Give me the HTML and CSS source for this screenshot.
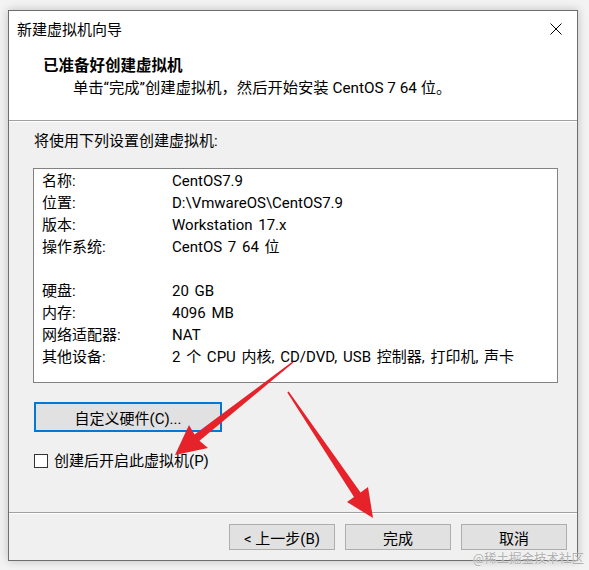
FILE: index.html
```html
<!DOCTYPE html>
<html lang="zh-CN">
<head>
<meta charset="utf-8">
<title>新建虚拟机向导</title>
<link rel="stylesheet" href="styles.css">
</head>
<body>
<div class="window">
  <div class="titlebar">
    <span class="title">新建虚拟机向导</span>
    <svg class="close" width="12" height="12" viewBox="0 0 12 12"><path d="M0.5 0.5 L11.5 11.5 M11.5 0.5 L0.5 11.5" stroke="#000" stroke-width="1" fill="none"/></svg>
  </div>
  <div class="header">
    <div class="h-title">已准备好创建虚拟机</div>
    <div class="h-sub">单击“完成”创建虚拟机，然后开始安装 CentOS 7 64 位。</div>
  </div>
  <div class="content">
    <div class="intro">将使用下列设置创建虚拟机:</div>
    <div class="summary">
      <div class="row"><span class="k">名称:</span><span class="v">CentOS7.9</span></div>
      <div class="row"><span class="k">位置:</span><span class="v">D:\VmwareOS\CentOS7.9</span></div>
      <div class="row"><span class="k">版本:</span><span class="v">Workstation 17.x</span></div>
      <div class="row"><span class="k">操作系统:</span><span class="v">CentOS 7 64 位</span></div>
      <div class="row"></div>
      <div class="row"><span class="k">硬盘:</span><span class="v">20 GB</span></div>
      <div class="row"><span class="k">内存:</span><span class="v">4096 MB</span></div>
      <div class="row"><span class="k">网络适配器:</span><span class="v">NAT</span></div>
      <div class="row"><span class="k">其他设备:</span><span class="v">2 个 CPU 内核, CD/DVD, USB 控制器, 打印机, 声卡</span></div>
    </div>
    <button class="btn btn-custom">自定义硬件(C)...</button>
    <label class="check"><span class="box"></span><span>创建后开启此虚拟机(P)</span></label>
  </div>
  <div class="footer">
    <button class="btn btn-foot">&lt; 上一步(B)</button>
    <button class="btn btn-foot">完成</button>
    <button class="btn btn-foot">取消</button>
  </div>
</div>
<svg class="annot" width="589" height="570" viewBox="0 0 589 570">
  <polygon fill="#e6232b" points="292.5,361.4 194.5,434.6 189,425 175,455 208,448 199.5,440.8 293.5,362.6"/>
  <polygon fill="#e6232b" points="288.7,391.6 360.6,492.5 368,487 373,518 347,502 354,497.1 287.3,392.4"/>
</svg>
<div class="watermark">@稀土掘金技术社区</div>
</body>
</html>
```
FILE: styles.css
```css
html, body {
  margin: 0;
  padding: 0;
}
body {
  width: 589px;
  height: 570px;
  background: #f3f3f3;
  font-family: Roboto, "Noto Sans CJK SC", sans-serif;
  font-size: 15px;
  color: #000;
  position: relative;
  overflow: hidden;
}
.window {
  margin: 10px 0 0 8px;
  width: 570px;
  height: 551px;
  box-sizing: border-box;
  border: 1px solid #6e6e6e;
  background: #f0f0f0;
  box-shadow: 0 0 9px rgba(0, 0, 0, 0.22);
  display: flex;
  flex-direction: column;
}
.titlebar {
  height: 39px;
  background: #fff;
  display: flex;
  align-items: center;
  justify-content: space-between;
  padding: 0 15px 0 8px;
}
.title {
  font-size: 15px;
  line-height: 39px;
}
.close {
  display: block;
  margin-top: -3px;
}
.header {
  height: 71px;
  box-sizing: border-box;
  background: #fff;
  border-bottom: 1px solid #a0a0a0;
  padding-top: 6px;
}
.h-title {
  padding-left: 34px;
  font-weight: bold;
  font-size: 15.5px;
  line-height: 20px;
}
.h-sub {
  padding-left: 64px;
  margin-top: 2px;
  font-size: 15.3px;
  line-height: 20px;
}
.content {
  height: 391px;
  box-sizing: border-box;
  padding: 10px 19px 0 24px;
  border-top: 1px solid #fff;
  display: flex;
  flex-direction: column;
  align-items: flex-start;
}
.intro {
  line-height: 20px;
  padding-left: 1px;
  margin-top: -1px;
}
.summary {
  margin-top: 17px;
  width: 525px;
  height: 215px;
  box-sizing: border-box;
  border: 1px solid #828282;
  background: #fff;
  padding: 1px 0 0 8px;
}
.row {
  display: flex;
  height: 22px;
  line-height: 22px;
}
.k {
  width: 130px;
  flex: none;
}
.v {
  word-spacing: 2px;
}
.btn {
  font-family: inherit;
  font-size: 15px;
  color: #000;
  background: #e1e1e1;
  border: 1px solid #adadad;
  padding: 0;
  margin: 0;
}
.btn-custom {
  margin-top: 19px;
  margin-left: 1px;
  width: 188px;
  height: 30px;
  border: 2px solid #0078d7;
}
.check {
  margin-top: 19px;
  margin-left: 1px;
  display: flex;
  align-items: center;
  gap: 6px;
  line-height: 20px;
}
.box {
  width: 14px;
  height: 14px;
  box-sizing: border-box;
  border: 1px solid #333;
  background: #fff;
}
.footer {
  height: 48px;
  box-sizing: border-box;
  border-top: 1px solid #a0a0a0;
  box-shadow: inset 0 1px 0 #fff;
  display: flex;
  justify-content: flex-end;
  gap: 10px;
  padding: 11px 10px 0 0;
}
.btn-foot {
  width: 106px;
  height: 26px;
}
.annot {
  position: absolute;
  left: 0;
  top: 0;
  pointer-events: none;
}
.watermark {
  position: absolute;
  right: 5px;
  bottom: 3px;
  font-size: 12.5px;
  line-height: 16px;
  color: rgba(165, 165, 165, 0.9);
  text-shadow: 0 0 1px #fff;
}
```
